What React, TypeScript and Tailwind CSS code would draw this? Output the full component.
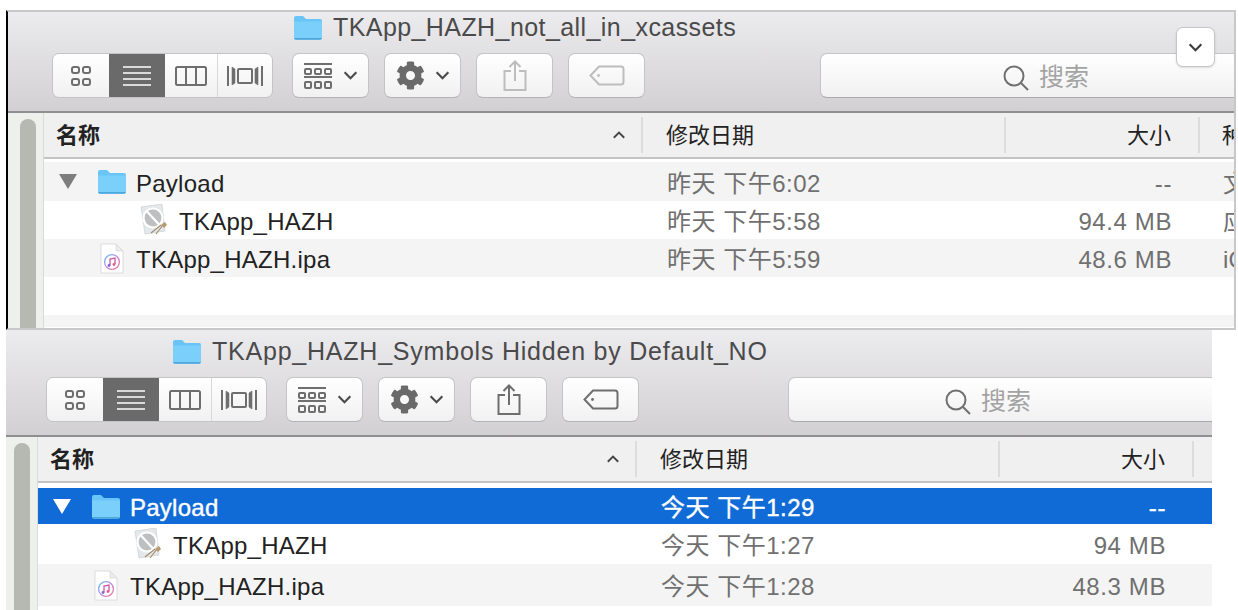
import { FaCog } from "react-icons/fa";

const FONT = "font-['Helvetica_Neue','Liberation_Sans','Noto_Sans_CJK_SC',sans-serif]";

const Chevron = ({ className }: { className: string }) => (
  <svg viewBox="0 0 16 10" className={className} fill="none" stroke="currentColor" strokeWidth="2.4">
    <path d="M1.5 1.5 8 8l6.5-6.5" />
  </svg>
);

const GridIcon = () => (
  <svg width="22" height="22" viewBox="0 0 22 22" fill="none" stroke="#6e6e6e" strokeWidth="2">
    <rect x="2" y="2" width="7" height="6" rx="2" />
    <rect x="13" y="2" width="7" height="6" rx="2" />
    <rect x="2" y="14" width="7" height="6" rx="2" />
    <rect x="13" y="14" width="7" height="6" rx="2" />
  </svg>
);

const ListIcon = () => (
  <svg width="28" height="20" viewBox="0 0 28 20" fill="none" stroke="#fff" strokeWidth="1.6">
    <path d="M0 1h28M0 7h28M0 13h28M0 19h28" />
  </svg>
);

const ColumnsIcon = () => (
  <svg width="32" height="20" viewBox="0 0 32 20" fill="none" stroke="#6e6e6e" strokeWidth="2">
    <rect x="1" y="1" width="30" height="18" rx="1.5" />
    <path d="M11 1v18M21 1v18" />
  </svg>
);

const CoverIcon = () => (
  <svg width="36" height="20" viewBox="0 0 36 20" fill="none" stroke="#6e6e6e" strokeWidth="2">
    <rect x="11" y="3" width="14" height="14" rx="1" />
    <path d="M1 0v20M35 0v20" strokeWidth="2" />
    <path d="M5 1v18l3-2V3zM31 1v18l-3-2V3z" fill="#6e6e6e" strokeWidth="0.6" />
  </svg>
);

const GroupIcon = () => (
  <svg width="28" height="26" viewBox="0 0 28 26" fill="none" stroke="#6e6e6e" strokeWidth="2">
    <path d="M0 1h28M0 14h28" />
    <rect x="1" y="6" width="6" height="5" rx="1" />
    <rect x="11" y="6" width="6" height="5" rx="1" />
    <rect x="21" y="6" width="6" height="5" rx="1" />
    <rect x="1" y="19" width="6" height="6" rx="1" />
    <rect x="11" y="19" width="6" height="6" rx="1" />
    <rect x="21" y="19" width="6" height="6" rx="1" />
  </svg>
);

const ShareIcon = ({ color }: { color: string }) => (
  <svg width="24" height="31" viewBox="0 0 24 31" fill="none" stroke={color} strokeWidth="2">
    <path d="M8 11H1.500v19h21V11H16" />
    <path d="M12 21V2M6.500 7 12 1.500 17.500 7" />
  </svg>
);

const TagIcon = ({ color }: { color: string }) => (
  <svg width="36" height="21" viewBox="0 0 36 21" fill="none" stroke={color} strokeWidth="2">
    <path d="M10 1.500h22a2.500 2.500 0 0 1 2.500 2.500v13a2.500 2.500 0 0 1-2.500 2.500H10L1.500 10.500z" />
    <circle cx="9.500" cy="10.500" r="1.400" fill={color} stroke="none" />
  </svg>
);

const SearchIcon = () => (
  <svg width="26" height="26" viewBox="0 0 26 26" fill="none" stroke="#6f6f6f" strokeWidth="2">
    <circle cx="11" cy="11" r="9.500" />
    <path d="m18 18 7 7" />
  </svg>
);

const FolderIcon = () => (
  <svg width="30" height="25" viewBox="0 0 30 25" className="shrink-0">
    <path d="M1 3a2 2 0 0 1 2-2h7l3 3h14a2 2 0 0 1 2 2v16.500a2 2 0 0 1-2 2H3a2 2 0 0 1-2-2z" fill="#69c4f7" />
    <path d="M1 6.500h28v16a2 2 0 0 1-2 2H3a2 2 0 0 1-2-2z" fill="#7bd0fb" />
    <path d="M1 23h28v0a2 2 0 0 1-2 1.700H3A2 2 0 0 1 1 23z" fill="#4fa8dc" />
  </svg>
);

const AppIcon = () => (
  <svg width="28" height="32" viewBox="0 0 28 32" className="shrink-0">
    <path d="M1 3 22 0l3 27-20 3z" fill="#e4e8ea" stroke="#c5cacd" strokeWidth=".6" />
    <circle cx="13" cy="14" r="9.500" fill="#bdbfc0" stroke="#fff" strokeWidth="2.200" />
    <path d="m6.500 7 13 14" stroke="#fff" strokeWidth="2.200" />
    <path d="m11 29 10-8M16 30l7-9" stroke="#a08a6c" strokeWidth="1.100" />
    <path d="m21 21 4-3 2 3-3 3z" fill="#b79a72" />
  </svg>
);

const ItunesIcon = () => (
  <svg width="24" height="31" viewBox="0 0 24 31" className="shrink-0">
    <defs>
      <linearGradient id="ring" x1="0" y1="0" x2="1" y2="1">
        <stop offset="0" stopColor="#5ec4f5" />
        <stop offset=".5" stopColor="#c08ae8" />
        <stop offset="1" stopColor="#f56f8c" />
      </linearGradient>
    </defs>
    <path d="M1 1h15l7 7v22H1z" fill="#fff" stroke="#d4d4d4" strokeWidth=".8" />
    <path d="M16 1v7h7z" fill="#ececec" stroke="#d4d4d4" strokeWidth=".6" />
    <circle cx="12" cy="19" r="7.400" fill="#fff" stroke="url(#ring)" strokeWidth="1.300" />
    <path d="M10 22.500v-6.500l5-1v6" fill="none" stroke="#c75aa8" strokeWidth="1.300" />
    <circle cx="9" cy="22.500" r="1.400" fill="#8a62d8" />
    <circle cx="14" cy="21.500" r="1.400" fill="#e25a86" />
  </svg>
);

type RowData = {
  height: string;
  bg: string;
  type?: "folder" | "app" | "ipa";
  name?: string;
  date?: string;
  size?: string;
  kind?: string;
  selected?: boolean;
};

const Row = ({ row }: { row: RowData }) => {
  const dateColor = row.selected ? "text-white [-webkit-text-stroke:0.4px_white]" : "text-[#707070]";
  return (
    <div className={`flex shrink-0 items-center whitespace-nowrap text-[24px] tracking-[0.25px] ${row.height} ${row.bg}`}>
      <div className="flex w-[599px] shrink-0 items-center">
        {row.type === "folder" && (
          <div className="flex items-center pl-[15px]">
            <div
              className={`h-0 w-0 border-x-[9px] border-t-[15px] border-x-transparent ${
                row.selected ? "border-t-white" : "border-t-[#7d7d7d]"
              }`}
            />
            <div className="ml-[20px]">
              <FolderIcon />
            </div>
            <span className={`ml-[9px] pt-[4px] ${dateColor.startsWith("text-white") ? dateColor : "text-[#222]"}`}>{row.name}</span>
          </div>
        )}
        {row.type === "app" && (
          <div className="flex items-center pl-[96px]">
            <AppIcon />
            <span className="ml-[11px] pt-[4px] text-[#222]">{row.name}</span>
          </div>
        )}
        {row.type === "ipa" && (
          <div className="flex items-center pl-[56px]">
            <ItunesIcon />
            <span className="ml-[12px] pt-[4px] text-[#222]">{row.name}</span>
          </div>
        )}
      </div>
      <div className={`w-[363px] shrink-0 pl-[24px] pt-[4px] tracking-[0.5px] ${dateColor}`}>{row.date}</div>
      <div className={`w-[194px] shrink-0 pr-[28px] pt-[4px] text-right tracking-[0.6px] ${dateColor}`}>{row.size}</div>
      <div className="shrink-0 pl-[23px] pt-[4px] text-[#707070]">{row.kind}</div>
    </div>
  );
};

const ToolButton = ({ children, width }: { children: React.ReactNode; width: string }) => (
  <div
    className={`flex h-[45px] shrink-0 items-center justify-center rounded-[7px] border border-[#c4c3c5] border-b-[#b4b3b5] bg-gradient-to-b from-[#ffffff] to-[#f1f1f1] ${width}`}
  >
    {children}
  </div>
);

type WindowProps = {
  outer: string;
  toolbarPad: string;
  titleRow: string;
  titlePad: string;
  titleTracking: string;
  title: string;
  sidePad: string;
  disabled: boolean;
  searchBox: string;
  showKind: boolean;
  gapRow: string;
  rows: RowData[];
  popup?: boolean;
};

const FinderWindow = (p: WindowProps) => {
  const actionColor = p.disabled ? "#bdbdbd" : "#6e6e6e";
  return (
    <div className={`relative flex flex-col overflow-hidden ${p.outer}`}>
      <div className={`flex shrink-0 flex-col border-b-2 border-[#8f8e90] bg-gradient-to-b from-[#ecebee] to-[#d2d0d3] pb-[13px] ${p.toolbarPad}`}>
        <div className={`flex items-center text-[25px] text-[#4a4a4a] ${p.titleRow} ${p.titlePad}`}>
          <FolderIcon />
          <span className={`ml-[10px] whitespace-nowrap pt-[2px] ${p.titleTracking}`}>{p.title}</span>
        </div>
        <div className="flex items-center">
          <div className="flex h-[45px] w-[221px] shrink-0 overflow-hidden rounded-[7px] border border-[#c4c3c5] bg-gradient-to-b from-[#ffffff] to-[#f1f1f1]">
            <div className="flex w-[56px] shrink-0 items-center justify-center">
              <GridIcon />
            </div>
            <div className="flex w-[56px] shrink-0 items-center justify-center bg-[#6a6a6a]">
              <ListIcon />
            </div>
            <div className="flex w-[53px] shrink-0 items-center justify-center border-r border-[#d8d8d8]">
              <ColumnsIcon />
            </div>
            <div className="flex w-[54px] shrink-0 items-center justify-center">
              <CoverIcon />
            </div>
          </div>
          <div className="ml-[19px] shrink-0">
            <ToolButton width="w-[77px] gap-[11px] text-[#4a4a4a]">
              <GroupIcon />
              <Chevron className="h-[9px] w-[15px]" />
            </ToolButton>
          </div>
          <div className="ml-[15px] shrink-0">
            <ToolButton width="w-[77px] gap-[10px] text-[#4a4a4a]">
              <FaCog className="text-[29px] text-[#6a6a6a]" />
              <Chevron className="h-[9px] w-[15px]" />
            </ToolButton>
          </div>
          <div className="ml-[15px] shrink-0">
            <ToolButton width="w-[77px]">
              <ShareIcon color={actionColor} />
            </ToolButton>
          </div>
          <div className="ml-[15px] shrink-0">
            <ToolButton width="w-[77px]">
              <TagIcon color={actionColor} />
            </ToolButton>
          </div>
          <div className={`flex h-[45px] w-[460px] shrink-0 items-center rounded-l-[7px] border border-[#c4c3c5] border-b-[#a9a8aa] bg-gradient-to-b from-[#ffffff] to-[#f1f1f1] pt-[4px] ${p.searchBox}`}>
            <SearchIcon />
            <span className="ml-[10px] text-[25px] text-[#a3a3a3]">搜索</span>
          </div>
        </div>
      </div>
      <div className="flex min-h-0 flex-1">
        <div className={`shrink-0 border-r border-[#d8dbd6] bg-[#eef0ec] ${p.sidePad}`}>
          <div className="mt-[6px] h-[400px] w-[16px] rounded-t-[8px] bg-[#b6b8b2]" />
        </div>
        <div className="flex min-w-0 flex-1 flex-col bg-white">
          <div className="flex h-[46px] shrink-0 items-center whitespace-nowrap border-b-2 border-[#c4c4c4] bg-[#f0f0f0] text-[22px] text-[#222]">
            <div className="flex h-[36px] w-[599px] shrink-0 items-center justify-between border-r-2 border-[#dcdcdc] pl-[12px] pr-[15px] font-bold">
              <span>名称</span>
              <Chevron className="h-[8px] w-[14px] rotate-180 text-[#444]" />
            </div>
            <div className="flex h-[36px] w-[363px] shrink-0 items-center border-r-2 border-[#dcdcdc] pl-[23px]">修改日期</div>
            <div className="flex h-[36px] w-[194px] shrink-0 items-center justify-end border-r-2 border-[#dcdcdc] pr-[27px]">大小</div>
            {p.showKind && <div className="shrink-0 pl-[22px]">种类</div>}
          </div>
          <div className={`shrink-0 ${p.gapRow}`} />
          {p.rows.map((row, i) => (
            <Row key={i} row={row} />
          ))}
        </div>
      </div>
      {p.popup && (
        <div className="absolute left-[1168px] top-[15px] flex h-[40px] w-[39px] items-center justify-center rounded-[7px] border border-[#c6c6c6] bg-white text-[#3c3c3c] shadow-sm">
          <Chevron className="h-[9px] w-[15px]" />
        </div>
      )}
    </div>
  );
};

const topRows: RowData[] = [
  { height: "h-[39px]", bg: "bg-[#f4f4f4]", type: "folder", name: "Payload", date: "昨天 下午6:02", size: "--", kind: "文件夹" },
  { height: "h-[38px]", bg: "bg-white", type: "app", name: "TKApp_HAZH", date: "昨天 下午5:58", size: "94.4 MB", kind: "应用程序" },
  { height: "h-[38px]", bg: "bg-[#f4f4f4]", type: "ipa", name: "TKApp_HAZH.ipa", date: "昨天 下午5:59", size: "48.6 MB", kind: "iOS" },
  { height: "h-[38px]", bg: "bg-white" },
  { height: "h-[12px]", bg: "bg-[#f4f4f4]" },
];

const bottomRows: RowData[] = [
  { height: "h-[36px]", bg: "bg-[#116bd6]", type: "folder", name: "Payload", date: "今天 下午1:29", size: "--", selected: true },
  { height: "h-[40px]", bg: "bg-white", type: "app", name: "TKApp_HAZH", date: "今天 下午1:27", size: "94 MB" },
  { height: "h-[42px]", bg: "bg-[#f4f4f4]", type: "ipa", name: "TKApp_HAZH.ipa", date: "今天 下午1:28", size: "48.3 MB" },
];

export default function App() {
  return (
    <div className={`h-[610px] w-[1238px] overflow-hidden bg-white pl-[6px] pt-[10px] ${FONT}`}>
      <FinderWindow
        outer="h-[320px] w-[1230px] border-y-2 border-r-2 border-y-[#c8c8c8] border-r-[#c8c8c8] border-l-2 border-l-black"
        toolbarPad="pl-[44px]"
        titleRow="h-[30px] mb-[11px]"
        titlePad="pl-[241px]"
        titleTracking="tracking-[0.42px]"
        title="TKApp_HAZH_not_all_in_xcassets"
        sidePad="w-[36px] pl-[12px]"
        disabled
        searchBox="ml-[175px] pl-[182px]"
        showKind
        gapRow="h-[3px]"
        rows={topRows}
        popup
      />
      <FinderWindow
        outer="h-[280px] w-[1206px]"
        toolbarPad="pl-[40px]"
        titleRow="h-[42px] mb-[5px]"
        titlePad="pl-[126px]"
        titleTracking="tracking-[0.78px]"
        title="TKApp_HAZH_Symbols Hidden by Default_NO"
        sidePad="w-[32px] pl-[8px]"
        disabled={false}
        searchBox="ml-[149px] pl-[156px]"
        showKind={false}
        gapRow="h-[5px]"
        rows={bottomRows}
      />
    </div>
  );
}
